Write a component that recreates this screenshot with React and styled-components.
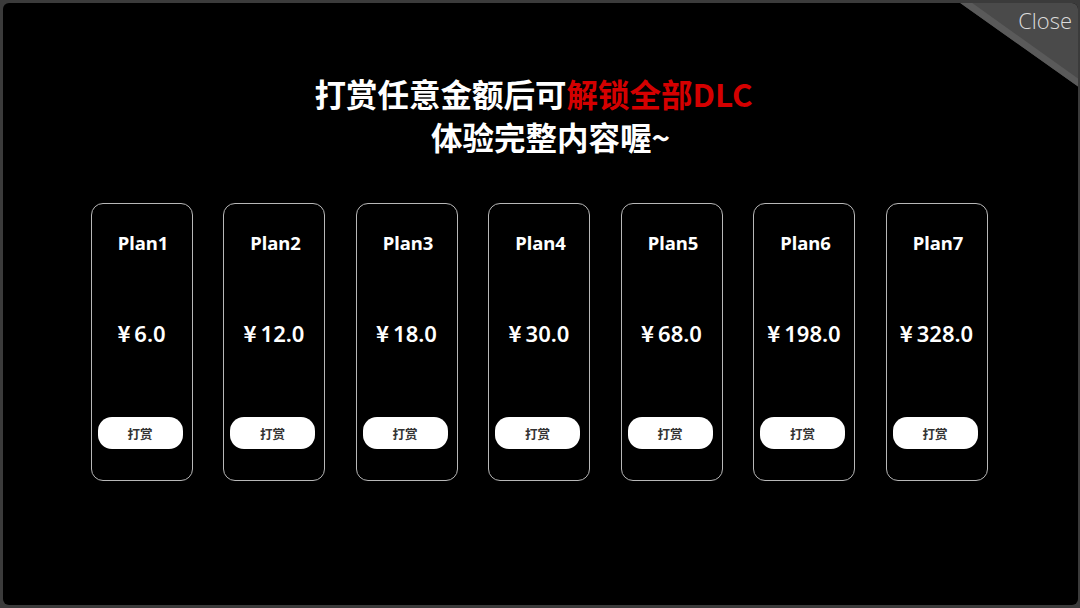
import React from "react";
import styled, { createGlobalStyle } from "styled-components";

const GlobalStyle = createGlobalStyle`
  html, body {
    margin: 0;
    padding: 0;
    background: #3b3b3b;
    font-family: "Noto Sans", "Noto Sans CJK SC", sans-serif;
  }
`;

const plans = [
  { name: "Plan1", price: "6.0" },
  { name: "Plan2", price: "12.0" },
  { name: "Plan3", price: "18.0" },
  { name: "Plan4", price: "30.0" },
  { name: "Plan5", price: "68.0" },
  { name: "Plan6", price: "198.0" },
  { name: "Plan7", price: "328.0" },
];

export default function App() {
  return (
    <>
      <GlobalStyle />
      <Frame>
        <Panel>
          <Heading>
            <Line $shift={-7}>
              打赏任意金额后可<Red>解锁全部DLC</Red>
            </Line>
            <Line $shift={10}>体验完整内容喔~</Line>
          </Heading>
          <CardRow>
            {plans.map((p) => (
              <Card key={p.name}>
                <PlanName>{p.name}</PlanName>
                <Price>
                  <Yen>¥</Yen>
                  {p.price}
                </Price>
                <TipButton>打赏</TipButton>
              </Card>
            ))}
          </CardRow>
          <CloseCorner>
            <svg width="124" height="88" viewBox="0 0 124 88">
              <polygon points="0,0 124,0 124,88" fill="#4a4a4a" />
              <polygon points="0,0 12,0 124,80 124,88" fill="#5a5a5a" />
            </svg>
            <CloseLabel>Close</CloseLabel>
          </CloseCorner>
        </Panel>
      </Frame>
    </>
  );
}

const Frame = styled.div`
  width: 1080px;
  height: 608px;
  box-sizing: border-box;
  padding: 3px 2px 3px 3px;
  background: #3b3b3b;
`;

const Panel = styled.div`
  position: relative;
  height: 100%;
  background: #000;
  border-radius: 6px;
  overflow: hidden;
  display: flex;
  flex-direction: column;
  align-items: center;
`;

const Heading = styled.div`
  margin-top: 69px;
  display: flex;
  flex-direction: column;
  align-items: center;
  color: #fff;
  font-family: "Noto Sans CJK SC", "Noto Sans", sans-serif;
  font-weight: 700;
  font-size: 31.5px;
`;

const Line = styled.div`
  line-height: 43px;
  transform: translateX(${(p) => p.$shift || 0}px);
`;

const Red = styled.span`
  color: #d40000;
`;

const CardRow = styled.div`
  margin-top: 45px;
  margin-left: -3px;
  display: flex;
  gap: 30.5px;
`;

const Card = styled.div`
  width: 102px;
  height: 278px;
  box-sizing: border-box;
  border: 1.5px solid #b8b8b8;
  border-radius: 12px;
  display: flex;
  flex-direction: column;
  align-items: center;
  padding: 27px 0 31px;
  color: #fff;
`;

const PlanName = styled.div`
  font-weight: 700;
  font-size: 18.5px;
  line-height: 24px;
  margin-left: 3px;
`;

const Price = styled.div`
  margin-top: 62px;
  font-weight: 600;
  font-size: 22px;
  line-height: 30px;
`;

const Yen = styled.span`
  font-family: "Noto Sans CJK SC", sans-serif;
  margin-right: 4px;
`;

const TipButton = styled.div`
  margin-top: auto;
  margin-right: 3px;
  width: 85px;
  height: 32px;
  border-radius: 14px;
  background: #fff;
  color: #333;
  font-family: "Noto Sans CJK SC", sans-serif;
  font-weight: 700;
  font-size: 12.5px;
  display: flex;
  align-items: center;
  justify-content: center;
`;

const CloseCorner = styled.div`
  position: absolute;
  top: -3px;
  right: -2px;
  width: 124px;
  height: 88px;

  svg {
    display: block;
  }
`;

const CloseLabel = styled.span`
  position: absolute;
  top: 5px;
  right: 8px;
  color: #dcdcdc;
  font-family: "Open Sans", sans-serif;
  font-weight: 300;
  font-size: 22px;
  line-height: 30px;
`;
